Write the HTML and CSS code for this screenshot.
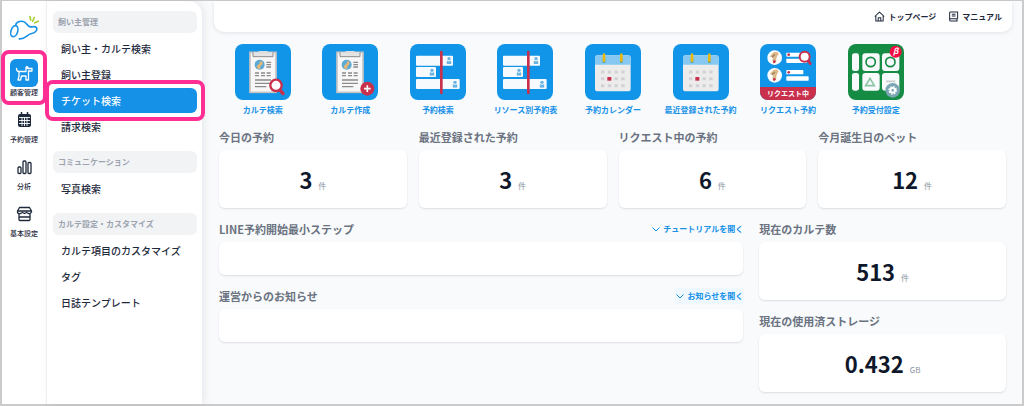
FILE: index.html
```
<!DOCTYPE html>
<html lang="ja">
<head>
    <meta charset="UTF-8">
    <meta name="viewport" content="width=device-width, initial-scale=1.0">
    <title>トップページ</title>
    <link rel="stylesheet" href="styles.css">
</head>
<body>
    <!-- Shared drawings for the shortcut tiles -->
    <svg class="defs" aria-hidden="true">
        <symbol id="clipboard" viewBox="0 0 168 168">
            <rect x="45" y="25" width="78" height="120" fill="#f7f7f7" stroke="#c9c4c2" stroke-width="5"/>
            <path d="M54 25v13h60V25" fill="#e4e4e4" stroke="#8e8e8e" stroke-width="3"/>
            <rect x="71" y="21" width="27" height="7" fill="#ddd"/>
            <circle cx="74" cy="62" r="15" fill="#5aa9d6"/>
            <path d="M68 74l-3-8 8-7 3-8 6 2 1 7-6 6-2 9z" fill="#e3b778"/>
            <g stroke="#8b8b8b" stroke-width="4">
                <path d="M94 55h14M94 62h14M94 69h14"/>
                <path d="M60 87h12M78 87h12M95 87h12M60 95h12M78 95h12M95 95h12"/>
                <path d="M60 108h48M60 118h48M60 128h34"/>
            </g>
        </symbol>
        <symbol id="person" viewBox="0 0 16 22">
            <circle cx="8" cy="6" r="5"/>
            <path d="M1 22v-7q0-3 4-3l3 3 3-3q4 0 4 3v7z"/>
        </symbol>
        <symbol id="bars" viewBox="0 0 168 168">
            <g fill="#f7fafd">
                <rect x="18" y="35" width="111" height="30" rx="3"/>
                <rect x="18" y="69" width="60" height="30" rx="3"/>
                <rect x="18" y="105" width="131" height="30" rx="3"/>
            </g>
            <g fill="#69b4e2">
                <use href="#person" x="109" y="38" width="16" height="22"/>
                <use href="#person" x="58" y="73" width="16" height="22"/>
                <use href="#person" x="127" y="109" width="16" height="22"/>
            </g>
            <path d="M94 24v123" stroke="#c9304c" stroke-width="8" stroke-linecap="round"/>
        </symbol>
        <symbol id="calendar" viewBox="0 0 168 168">
            <rect x="30" y="34" width="107" height="108" rx="8" fill="#ececec"/>
            <path d="M30 62V42q0-8 8-8h91q8 0 8 8v20z" fill="#86c8f2"/>
            <path d="M57 46v10M109 46v10" stroke="#4c9a92" stroke-width="8"/>
            <path d="M57 32v18M109 32v18" stroke="#e8b90f" stroke-width="8" stroke-linecap="round"/>
            <path d="M48 84h72M48 104h72M48 125h72" stroke="#d2d2d2" stroke-width="9" stroke-dasharray="10 10.3"/>
            <rect x="67" y="99" width="12" height="11" fill="#c9304c"/>
        </symbol>
        <symbol id="chevron" viewBox="0 0 10 10">
            <path d="M1.5 3.500L5 7l3.500-3.500" fill="none" stroke="currentColor"/>
        </symbol>
    </svg>

    <div class="app">
        <nav class="rail" aria-label="メインメニュー">
            <a class="logo" href="#" aria-label="ホーム">
                <svg viewBox="27 43 93 80">
                    <g fill="none" stroke="#1691e8" stroke-width="5" stroke-linecap="round" stroke-linejoin="round">
                        <ellipse cx="43" cy="94" rx="10" ry="17" transform="rotate(18 43 94)"/>
                        <path d="M47 77C47 68 58 62 70 65C80 67 80 79 91 81C99 82 106 77 110 84C113 92 104 100 95 101C79 104 79 118 58 117"/>
                    </g>
                    <path d="M90 50l2 11M103 53l-5 11M115 64l-11 5" stroke="#a7cf32" stroke-width="5" stroke-linecap="round"/>
                </svg>
            </a>
            <a class="rail-item current" href="#">
                <span class="rail-icon">
                    <svg viewBox="0 0 28 28" fill="none" stroke="#fff" stroke-width="1.300" stroke-linejoin="round" stroke-linecap="round">
                        <path d="M6.500 9.500q0 3 2.500 3h7V8.500l1.500 1h4.500v2.500h-3.500v9h-2.500v-4h-4.500l-1 4H8l1-4v-4.500M16 8.500l1-1 1.500 2"/>
                    </svg>
                </span>
                <span>顧客管理</span>
            </a>
            <a class="rail-item" href="#">
                <span class="rail-icon">
                    <svg viewBox="0 0 28 28">
                        <rect x="8" y="8" width="13" height="13" rx="2" fill="#1e293b"/>
                        <path d="M11.500 6v4M17.500 6v4" stroke="#1e293b" stroke-width="1.500"/>
                        <path d="M9 11.500h11M9 14.500h11M9 17.500h11M12 11.500v8.500M14.500 11.500v8.500M17 11.500v8.500" stroke="#fff" stroke-width=".9"/>
                    </svg>
                </span>
                <span>予約管理</span>
            </a>
            <a class="rail-item" href="#">
                <span class="rail-icon">
                    <svg viewBox="0 0 28 28" fill="none" stroke="#1e293b" stroke-width="1.300">
                        <rect x="8" y="14" width="3" height="6.500" rx="1"/>
                        <rect x="13" y="8" width="3" height="12.500" rx="1"/>
                        <rect x="18" y="9.500" width="3" height="11" rx="1"/>
                    </svg>
                </span>
                <span>分析</span>
            </a>
            <a class="rail-item" href="#">
                <span class="rail-icon">
                    <svg viewBox="0 0 28 28" fill="none" stroke="#1e293b" stroke-width="1.300" stroke-linejoin="round">
                        <path d="M9.500 7.500h10l2 3.500v1q-1 2-3 1.500l-2-1-2 1-2-1-2 1q-3 .5-3-1.500v-1zM8 11h13M9 14v5.500q0 1 1 1h9q1 0 1-1V14M9 17h11"/>
                    </svg>
                </span>
                <span>基本設定</span>
            </a>
        </nav>

        <nav class="submenu" aria-label="サブメニュー">
            <h2>飼い主管理</h2>
            <ul>
                <li><a href="#">飼い主・カルテ検索</a></li>
                <li><a href="#">飼い主登録</a></li>
                <li><a class="active" href="#">チケット検索</a></li>
                <li><a href="#">請求検索</a></li>
            </ul>
            <h2>コミュニケーション</h2>
            <ul>
                <li><a href="#">写真検索</a></li>
            </ul>
            <h2>カルテ設定・カスタマイズ</h2>
            <ul>
                <li><a href="#">カルテ項目のカスタマイズ</a></li>
                <li><a href="#">タグ</a></li>
                <li><a href="#">日誌テンプレート</a></li>
            </ul>
        </nav>

        <div class="page">
            <header class="topbar">
                <a href="#">
                    <svg viewBox="0 0 12 12" fill="none" stroke="currentColor" stroke-width="1.100" stroke-linejoin="round">
                        <path d="M.8 6L6 1.200 11.200 6M2 5v6h8V5M4.600 11V7.300h2.800V11"/>
                    </svg>
                    トップページ
                </a>
                <a href="#">
                    <svg viewBox="0 0 12 12" fill="none" stroke="currentColor" stroke-width="1.100">
                        <path d="M10.500 8.500V1H3Q1.800 1 1.800 2.200V9.800Q1.800 11 3 11h7.500M10.500 8.500H3q-1.200 0-1.200 1.200M4.200 3.500h4M4.200 5.500h4M9.800 8.500V11"/>
                    </svg>
                    マニュアル
                </a>
            </header>

            <main>
                <div class="shortcuts">
                    <a href="#">
                        <svg class="tile" viewBox="0 0 168 168">
                            <use href="#clipboard"/>
                            <path d="M135 138l9 11" stroke="#c9304c" stroke-width="10" stroke-linecap="round"/>
                            <circle cx="123" cy="124" r="17" fill="#fff" stroke="#c9304c" stroke-width="7"/>
                        </svg>
                        カルテ検索
                    </a>
                    <a href="#">
                        <svg class="tile" viewBox="0 0 168 168">
                            <use href="#clipboard"/>
                            <circle cx="136" cy="134" r="21" fill="#c9304c"/>
                            <path d="M126 134h20M136 124v20" stroke="#fff" stroke-width="5"/>
                        </svg>
                        カルテ作成
                    </a>
                    <a href="#">
                        <svg class="tile" viewBox="0 0 168 168"><use href="#bars"/></svg>
                        予約検索
                    </a>
                    <a href="#">
                        <svg class="tile" viewBox="0 0 168 168"><use href="#bars"/></svg>
                        リソース別予約表
                    </a>
                    <a href="#">
                        <svg class="tile" viewBox="0 0 168 168"><use href="#calendar"/></svg>
                        予約カレンダー
                    </a>
                    <a href="#">
                        <svg class="tile" viewBox="0 0 168 168"><use href="#calendar"/></svg>
                        最近登録された予約
                    </a>
                    <a href="#">
                        <svg class="tile" viewBox="0 0 168 168">
                            <g fill="#fff">
                                <circle cx="44" cy="41" r="22"/>
                                <circle cx="44" cy="94" r="22"/>
                                <rect x="79" y="26" width="54" height="12" rx="2"/>
                                <rect x="79" y="44" width="62" height="13" rx="2"/>
                                <rect x="79" y="78" width="51" height="13" rx="2"/>
                                <rect x="79" y="97" width="67" height="13" rx="2"/>
                            </g>
                            <g fill="#dcb98c">
                                <path d="M28 38l14-14 9-1 5 6-7 13v10l-8 9-4-13 4-10z"/>
                                <path d="M28 91l14-14 9-1 5 6-7 13v10l-8 9-4-13 4-10z"/>
                            </g>
                            <path d="M36 40l8-9M36 93l8-9" stroke="#a88258" stroke-width="5"/>
                            <g fill="#c9304c">
                                <circle cx="43" cy="53" r="4"/>
                                <circle cx="43" cy="106" r="4"/>
                                <circle cx="86" cy="32" r="4"/>
                                <circle cx="86" cy="85" r="4"/>
                                <rect y="129" width="168" height="39"/>
                            </g>
                            <path d="M144 49l7 10" stroke="#c9304c" stroke-width="8" stroke-linecap="round"/>
                            <circle cx="134" cy="38" r="15" fill="#fff" stroke="#c9304c" stroke-width="6"/>
                            <text class="tile-text" x="84" y="157" text-anchor="middle">リクエスト中</text>
                        </svg>
                        リクエスト予約
                    </a>
                    <a href="#">
                        <svg class="tile green" viewBox="0 0 168 168">
                            <g fill="#f8fafc">
                                <rect x="12" y="28" width="21" height="53" rx="7"/>
                                <rect x="43" y="28" width="52" height="53" rx="9"/>
                                <rect x="102" y="28" width="52" height="53" rx="9"/>
                                <rect x="12" y="87" width="21" height="53" rx="7"/>
                                <rect x="43" y="87" width="52" height="53" rx="9"/>
                                <rect x="102" y="87" width="52" height="53" rx="9"/>
                            </g>
                            <g fill="none" stroke-width="5">
                                <circle cx="68" cy="54" r="14" stroke="#168b43"/>
                                <circle cx="127" cy="54" r="14" stroke="#168b43"/>
                                <path d="M66 103l13 22H53z" stroke="#8cc3a3"/>
                                <path d="M114 112h28" stroke="#c9ccce"/>
                            </g>
                            <circle cx="134" cy="139" r="22" fill="#7ba6b3"/>
                            <circle cx="134" cy="139" r="7" fill="none" stroke="#fff" stroke-width="6"/>
                            <circle cx="134" cy="139" r="11" fill="none" stroke="#fff" stroke-width="4" stroke-dasharray="4.500 4.140"/>
                            <circle cx="143" cy="23" r="18" fill="#f20d42"/>
                            <text class="beta" x="143" y="31" text-anchor="middle">β</text>
                        </svg>
                        予約受付設定
                    </a>
                </div>

                <div class="stats">
                    <section>
                        <h3>今日の予約</h3>
                        <p class="card"><strong>3</strong><span>件</span></p>
                    </section>
                    <section>
                        <h3>最近登録された予約</h3>
                        <p class="card"><strong>3</strong><span>件</span></p>
                    </section>
                    <section>
                        <h3>リクエスト中の予約</h3>
                        <p class="card"><strong>6</strong><span>件</span></p>
                    </section>
                    <section>
                        <h3>今月誕生日のペット</h3>
                        <p class="card"><strong>12</strong><span>件</span></p>
                    </section>
                </div>

                <div class="columns">
                    <div class="stack">
                        <section>
                            <div class="heading">
                                <h3>LINE予約開始最小ステップ</h3>
                                <button type="button"><svg><use href="#chevron"/></svg>チュートリアルを開く</button>
                            </div>
                            <div class="card panel"></div>
                        </section>
                        <section>
                            <div class="heading">
                                <h3>運営からのお知らせ</h3>
                                <button class="focused" type="button"><svg><use href="#chevron"/></svg>お知らせを開く</button>
                            </div>
                            <div class="card panel"></div>
                        </section>
                    </div>
                    <div class="stack">
                        <section>
                            <h3>現在のカルテ数</h3>
                            <p class="card"><strong>513</strong><span>件</span></p>
                        </section>
                        <section>
                            <h3>現在の使用済ストレージ</h3>
                            <p class="card"><strong>0.432</strong><span>GB</span></p>
                        </section>
                    </div>
                </div>
            </main>
        </div>
    </div>
</body>
</html>
```

FILE: styles.css
```
* { box-sizing: border-box; }
body { margin: 0; font-family: "Noto Sans CJK JP", sans-serif; color: #1e293b; background-color: #f8fafc; }
h2, h3, p, ul { margin: 0; padding: 0; }
ul { list-style: none; }
a { color: inherit; text-decoration: none; }
button { border: none; background: none; padding: 0; font-family: inherit; cursor: pointer; }
.defs { position: absolute; width: 0; height: 0; }

.app {
    display: grid;
    grid-template-columns: 45px 155px 1fr;
    min-height: 100vh;
    border: 2px solid #cbcbcb;
    border-top-width: 1px;
}

/* Icon rail */
.rail {
    display: flex;
    flex-direction: column;
    align-items: center;
    gap: 9px;
    padding-top: 13px;
    background-color: #fff;
    border-right: 1px solid #f1f3f6;
}
.logo svg { display: block; width: 31px; height: 27px; }
.logo { margin-bottom: 9px; }
.rail-item {
    position: relative;
    display: flex;
    flex-direction: column;
    align-items: center;
    font-size: 7px;
    font-weight: 500;
    line-height: 10px;
    white-space: nowrap;
}
.rail-icon { width: 28px; height: 28px; border-radius: 6px; }
.rail-icon svg { display: block; width: 28px; height: 28px; }
.current .rail-icon { background-color: #1691e8; }

/* Pink frames around the highlighted entries */
.current::after,
.active::after {
    content: "";
    position: absolute;
    z-index: 2;
    border: 4px solid #ff2e93;
    border-radius: 8px;
    pointer-events: none;
}
.current::after { inset: -9px -9px -8px; }
.active::after { inset: -8px; }

/* Submenu */
.submenu {
    padding: 10px 5px 16px 6px;
    background-color: #fff;
    border-top-right-radius: 14px;
    box-shadow: 2px 0 8px rgba(15, 23, 42, 0.08);
}
.submenu h2 {
    padding: 0 5px;
    border-radius: 6px;
    background-color: #f2f3f5;
    color: #9ca3af;
    font-size: 8px;
    font-weight: 700;
    line-height: 22px;
}
.submenu ul { display: grid; gap: 1px; padding: 3px 0 12px; }
.submenu li a {
    position: relative;
    display: block;
    padding: 0 8px;
    border-radius: 6px;
    font-size: 10px;
    font-weight: 500;
    line-height: 25px;
    white-space: nowrap;
}
.submenu li .active { background-color: #1691e8; color: #fff; }

/* Main area */
.page { padding: 0 10px 12px 12px; min-width: 0; }
.topbar {
    display: flex;
    justify-content: flex-end;
    gap: 12px;
    padding: 0 10px;
    border-radius: 0 0 10px 10px;
    background-color: #fff;
    box-shadow: 0 1px 4px rgba(15, 23, 42, 0.1);
    font-size: 8px;
    font-weight: 700;
    line-height: 31px;
}
.topbar a { display: flex; align-items: center; gap: 3px; }
.topbar svg { width: 11px; height: 11px; }
main { padding: 12px 6px 0 5px; }

.shortcuts { display: grid; grid-template-columns: repeat(8, 1fr); width: 89%; margin-bottom: 13px; }
.shortcuts a {
    display: flex;
    flex-direction: column;
    align-items: center;
    gap: 4px;
    color: #1691e8;
    font-size: 8px;
    font-weight: 700;
    line-height: 12px;
    white-space: nowrap;
}
.tile { display: block; width: 56px; height: 56px; border-radius: 8px; background-color: #1195e8; }
.tile.green { background-color: #168b43; }
.tile-text { font-size: 21px; font-weight: 700; fill: #fff; }
.beta { font-size: 24px; font-weight: 700; font-style: italic; fill: #fff; }

.stats { display: grid; grid-template-columns: repeat(4, 1fr); gap: 12px; margin-bottom: 13px; }
.columns { display: grid; grid-template-columns: 17fr 8fr; gap: 16px; }
.stack { display: flex; flex-direction: column; gap: 13px; }
h3 { margin-bottom: 5px; color: #6b7280; font-size: 11px; font-weight: 700; line-height: 16px; }
.card {
    display: flex;
    align-items: baseline;
    justify-content: center;
    gap: 6px;
    padding: 14px 0;
    border-radius: 6px;
    background-color: #fff;
    box-shadow: 0 1px 2px rgba(15, 23, 42, 0.12);
}
.card strong { color: #0f172a; font-size: 22px; font-weight: 700; line-height: 30px; }
.card span { color: #8b93a1; font-size: 8px; line-height: 12px; }
.panel { min-height: 33px; }
.heading { display: flex; justify-content: space-between; align-items: flex-start; }
.heading button { display: flex; align-items: center; gap: 2px; color: #1691e8; font-size: 8px; font-weight: 700; line-height: 16px; }
.heading svg { width: 10px; height: 10px; }
.heading .focused { background-color: #eff8ff; }
```
